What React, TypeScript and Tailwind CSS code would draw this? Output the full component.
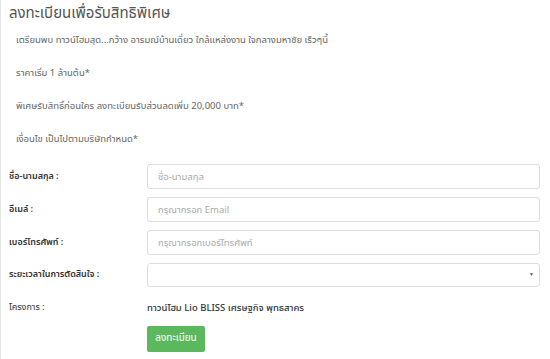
const intro = [
  "เตรียมพบ ทาวน์โฮมสุด...กว้าง อารมณ์บ้านเดี่ยว ใกล้แหล่งงาน ใจกลางมหาชัย เร็วๆนี้",
  "ราคาเริ่ม 1 ล้านต้น*",
  "พิเศษรับสิทธิ์ก่อนใคร ลงทะเบียนรับส่วนลดเพิ่ม 20,000 บาท*",
  "เงื่อนไข เป็นไปตามบริษัทกำหนด*",
];

const fields = [
  { label: "ชื่อ-นามสกุล :", placeholder: "ชื่อ-นามสกุล" },
  { label: "อีเมล์ :", placeholder: "กรุณากรอก Email" },
  { label: "เบอร์โทรศัพท์ :", placeholder: "กรุณากรอกเบอร์โทรศัพท์" },
];

export default function App() {
  return (
    <div
      className="w-[550px] h-[359px] bg-white border-l border-[#e5e5e5] overflow-hidden pl-2 pr-[10px]"
      style={{ fontFamily: '"Noto Sans Thai", "Noto Sans", sans-serif' }}
    >
      <h1 className="text-[15px] leading-[22px] text-[#555] pt-[3px]">
        ลงทะเบียนเพื่อรับสิทธิพิเศษ
      </h1>
      <div className="pl-[7px] pt-[7px] flex flex-col gap-[17px] text-[9.5px] leading-[16px] text-[#666]">
        {intro.map((line) => (
          <p key={line}>{line}</p>
        ))}
      </div>

      <form className="mt-[17px] flex flex-col gap-[8px]">
        {fields.map((f) => (
          <div key={f.label} className="flex items-center">
            <label className="w-[138px] text-[9px] font-semibold text-[#333]">{f.label}</label>
            <input
              placeholder={f.placeholder}
              className="flex-1 h-[25px] border border-[#ddd] rounded-[3px] px-[10px] text-[9.5px] placeholder:text-[#aaa] outline-none"
            />
          </div>
        ))}
        <div className="flex items-center">
          <label className="w-[138px] text-[9px] font-semibold text-[#333]">ระยะเวลาในการตัดสินใจ :</label>
          <div className="flex-1 h-[24px] border border-[#ddd] rounded-[3px] flex items-center justify-end pr-[5px]">
            <span className="text-[5px] text-[#555]">▼</span>
          </div>
        </div>
        <div className="flex items-center mt-[6px]">
          <span className="w-[138px] text-[9px] text-[#333]">โครงการ :</span>
          <span className="text-[9.5px] font-medium text-[#333]">ทาวน์โฮม Lio BLISS เศรษฐกิจ พุทธสาคร</span>
        </div>
        <div className="pl-[138px] mt-[1px]">
          <button type="button" className="w-[58px] h-[26px] bg-[#5cb85c] text-white text-[10px] rounded-[2px]">
            ลงทะเบียน
          </button>
        </div>
      </form>
    </div>
  );
}
